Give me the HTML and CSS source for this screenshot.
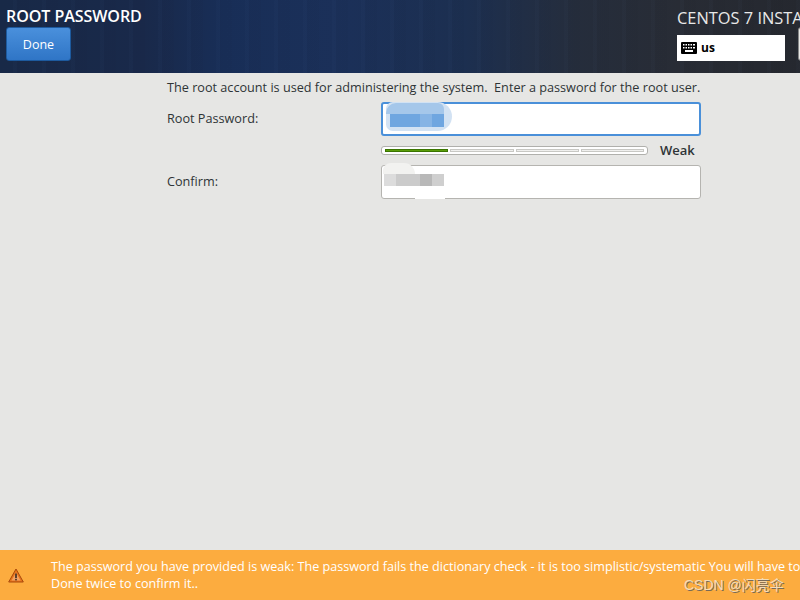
FILE: index.html
```html
<!DOCTYPE html>
<html lang="en">
<head>
<meta charset="utf-8">
<title>Root Password</title>
<link rel="stylesheet" href="styles.css">
</head>
<body>
<div class="screen">
  <header class="topbar">
    <div class="top-left">
      <div class="spoke-title">ROOT PASSWORD</div>
      <button class="done">Done</button>
    </div>
    <div class="top-right">
      <div class="product">CENTOS 7 INSTALLATION</div>
      <div class="top-right-row">
        <div class="layout-box">
          <svg class="kbd" width="16" height="12" viewBox="0 0 16 12">
            <rect width="16" height="12" rx="1" fill="#000"/>
            <g fill="#fff">
              <rect x="2" y="2" width="1.5" height="1.5"/><rect x="4.5" y="2" width="1.5" height="1.5"/><rect x="7" y="2" width="1.5" height="1.5"/><rect x="9.5" y="2" width="1.5" height="1.5"/><rect x="12" y="2" width="2" height="1.5"/>
              <rect x="2" y="5" width="1.5" height="1.5"/><rect x="4.5" y="5" width="1.5" height="1.5"/><rect x="7" y="5" width="1.5" height="1.5"/><rect x="9.5" y="5" width="1.5" height="1.5"/><rect x="12" y="5" width="2" height="1.5"/>
              <rect x="4" y="8" width="8" height="2"/>
            </g>
          </svg>
          <span class="layout-name">us</span>
        </div>
        <div class="help-btn"></div>
      </div>
    </div>
  </header>
  <main class="content">
    <p class="intro">The root account is used for administering the system.&nbsp; Enter a password for the root user.</p>
    <div class="form">
      <label class="field-label">Root Password:</label>
      <div class="entry entry-focus">
        <div class="smudge smudge-a"></div>
        <div class="smudge smudge-a2"></div>
        <div class="pix-row pix-blue"><i></i><i></i><i></i></div>
      </div>
      <div class="strength-row">
        <div class="meter">
          <div class="seg seg-on"></div><div class="seg"></div><div class="seg"></div><div class="seg"></div>
        </div>
        <span class="strength-label">Weak</span>
      </div>
      <label class="field-label">Confirm:</label>
      <div class="entry">
        <div class="smudge smudge-b"></div>
        <div class="smudge smudge-c"></div>
        <div class="pix-row pix-grey"><i></i><i></i><i></i><i></i></div>
      </div>
    </div>
  </main>
  <footer class="warning">
    <svg class="warn-icon" width="16" height="15" viewBox="0 0 16 15">
      <path d="M8 1 L15.3 14 H0.7 Z" fill="#e8751a" stroke="#a8480c" stroke-width="1" stroke-linejoin="round"/>
      <path d="M8 4.5 L12.5 12.6 H3.5 Z" fill="#f3a262"/>
      <rect x="7.2" y="5.5" width="1.6" height="4.5" fill="#3a2a20"/>
      <rect x="7.2" y="10.8" width="1.6" height="1.6" fill="#3a2a20"/>
    </svg>
    <div class="warn-text">
      <div class="warn-line">The password you have provided is weak: The password fails the dictionary check - it is too simplistic/systematic You will have to press</div>
      <div class="warn-line">Done twice to confirm it..</div>
    </div>
    <div class="watermark">CSDN @闪亮伞</div>
  </footer>
</div>
</body>
</html>
```
FILE: styles.css
```css
* { box-sizing: border-box; }
html, body { margin: 0; padding: 0; }
body { font-family: "Open Sans", "Noto Sans", "Noto Sans CJK SC", sans-serif; }
.screen {
  width: 800px; height: 600px; overflow: hidden;
  display: flex; flex-direction: column;
  background: #e6e6e4; position: relative;
}
.topbar {
  height: 73px; flex: none; display: flex; justify-content: space-between;
  color: #fff; overflow: hidden;
  background:
    repeating-linear-gradient(90deg, rgba(255,255,255,0) 0 13px, rgba(120,160,220,.02) 13px 17px, rgba(0,0,0,.02) 17px 29px),
    linear-gradient(90deg, #182947 0%, #19294a 18%, #182e57 28%, #1b3059 42%, #1c2f50 58%, #252d3c 72%, #282c35 85%, #25282f 100%);
}
.top-left { padding: 7px 0 0 6px; display: flex; flex-direction: column; }
.spoke-title { font-size: 16.1px; font-weight: 600; line-height: 19px; height: 20px; letter-spacing: -.1px; white-space: nowrap; }
.done {
  width: 65px; height: 34px; padding: 0; margin: 0;
  font: 12.5px "Open Sans", sans-serif; color: #fff;
  border: 1px solid #1d5a9e; border-radius: 3px;
  background: linear-gradient(#4a90dc, #2f75c6);
}
.top-right { width: 123px; flex: none; padding: 8px 0 0 0; overflow: hidden; }
.product { font-size: 16.4px; line-height: 19px; color: #e8e8e8; white-space: nowrap; height: 27px; }
.top-right-row { display: flex; gap: 13px; align-items: flex-start; width: 200px; }
.layout-box {
  width: 108px; height: 26px; background: #fff; color: #000;
  display: flex; align-items: center; gap: 4px; padding: 0 0 0 4px;
  flex: none;
}
.layout-name { font-size: 12px; font-weight: 700; line-height: 14px; }
.help-btn { width: 40px; height: 34px; margin-top: -8px; background: #e8e8e6; border: 1px solid #888; border-radius: 3px; flex: none; }
.content { flex: 1; padding: 6px 0 0 167px; }
.intro { margin: 0 0 6px; font-size: 12.67px; line-height: 17px; color: #2e3436; white-space: nowrap; }
.form { display: grid; grid-template-columns: 214px 320px; width: 534px; }
.field-label { font-size: 12.67px; line-height: 17px; color: #2e3436; align-self: center; padding-bottom: 1px; }
.entry {
  height: 34px; background: #fff; border: 1px solid #b5b4b0; border-radius: 3px;
  position: relative; overflow: visible;
}
.entry-focus { border: 2px solid #4a90d9; }
.strength-row {
  grid-column: 1 / 3; display: flex; align-items: center; padding-left: 214px;
  height: 29px;
}
.meter {
  width: 267px; height: 9px; flex: none; display: flex; gap: 2px;
  border: 1px solid #b0b0ac; border-radius: 3px; background: #fff; padding: 2px 3px;
}
.seg { flex: 1; background: #f0f0ee; border: 1px solid #c8c8c4; }
.seg-on { background: #5a9e0a; border-color: #3a7400; }
.strength-label { margin-left: 12px; font-size: 13px; font-weight: 600; color: #2e3436; line-height: 17px; }
.smudge { position: absolute; }
.smudge-a { left: 3px; top: -2px; width: 66px; height: 29px; border-radius: 14px 30px 30px 14px; background: #d2e2f3; }
.smudge-a2 { left: 3px; top: -1px; width: 58px; height: 11px; border-radius: 10px 6px 0 0; background: #a5c7ea; }
.smudge-b { left: 1px; top: -3px; width: 32px; height: 11px; border-radius: 10px 14px 0 0; background: #f2f2f0; }
.smudge-c { left: 33px; top: 30px; width: 30px; height: 3px; background: #fff; }
.pix-row { position: absolute; display: flex; }
.pix-blue { left: 7px; top: 10px; height: 13px; }
.pix-grey { left: 2px; top: 8px; height: 12px; }
.pix-row i { display: block; height: 100%; }
.pix-blue i:nth-child(1) { width: 30px; background: #6fa6e0; }
.pix-blue i:nth-child(2) { width: 12px; background: #86b4e5; }
.pix-blue i:nth-child(3) { width: 12px; background: #6fa6e0; }
.pix-grey i:nth-child(1) { width: 12px; background: #dcdcdc; }
.pix-grey i:nth-child(2) { width: 24px; background: #cbcbcb; }
.pix-grey i:nth-child(3) { width: 12px; background: #b8b8b8; }
.pix-grey i:nth-child(4) { width: 12px; background: #cfcfcf; }
.warning {
  height: 50px; flex: none; background: #fcac3f; color: #fff;
  display: flex; align-items: center; position: relative; overflow: hidden;
}
.warn-icon { flex: none; margin: 0 0 0 8px; }
.warn-text { margin-left: 27px; font-size: 12.6px; line-height: 17px; white-space: nowrap; }
.watermark {
  position: absolute; left: 684px; top: 24px;
  font: 14px "Liberation Sans", "Noto Sans CJK SC", sans-serif;
  color: #f3dcb8; text-shadow: 1px 1px 0 #7a6a55;
  white-space: nowrap;
}
```
